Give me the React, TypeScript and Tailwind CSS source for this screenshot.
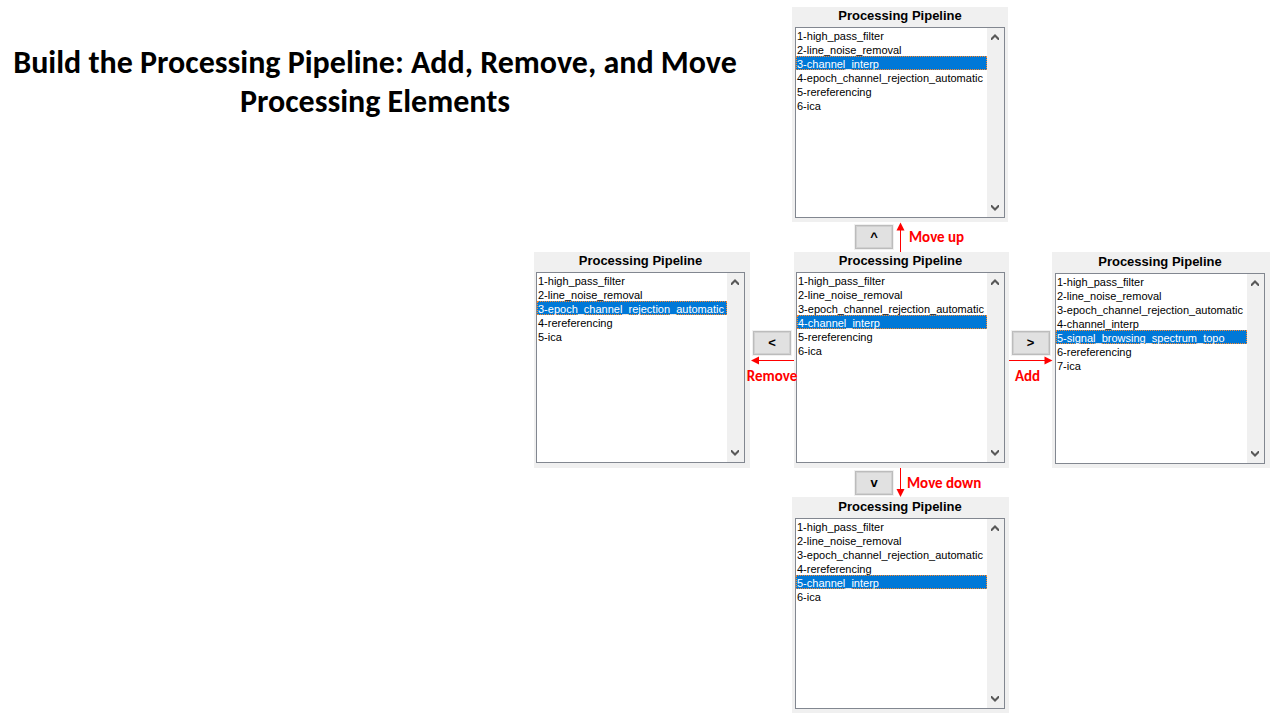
import { useId } from "react";
import type { ReactNode } from "react";

type PanelProps = {
  items: string[];
  selected: number;
  className: string;
  titleClass?: string;
};

function Chevron({ up = false }: { up?: boolean }) {
  return (
    <svg width="8" height="6" viewBox="0 0 8 6" fill="#585858" aria-hidden="true">
      <path d={up ? "M4 0L8 4V6H7L4 3L1 6H0V4Z" : "M4 6L8 2V0H7L4 3L1 0H0V2Z"} />
    </svg>
  );
}

function PipelinePanel({ items, selected, className, titleClass = "h-5" }: PanelProps) {
  const id = useId();
  return (
    <section className={`bg-[#f0f0f0] ${className}`}>
      <label
        htmlFor={id}
        className={`block text-center text-[13px] leading-[17px] font-bold text-black ${titleClass}`}
      >
        Processing Pipeline
      </label>
      <div className="flex h-[191px] border border-[#828790] bg-white">
        <select
          id={id}
          size={13}
          defaultValue={items[selected]}
          className="min-w-0 flex-1 appearance-none overflow-hidden rounded-none border-0 bg-white p-0 text-[11px] text-black outline-none"
        >
          {items.map((item, i) => (
            <option
              key={item}
              value={item}
              className={
                i === selected
                  ? "h-[14px] min-h-0 border border-dotted border-[#ff8728] bg-[#0078d7] bg-linear-to-r from-[#0078d7] to-[#0078d7] p-0 pt-px text-[11px] leading-[14px] text-white"
                  : "h-[14px] min-h-0 px-px pt-0.5 pb-0 text-[11px] leading-[14px] text-black"
              }
            >
              {item}
            </option>
          ))}
        </select>
        <div className="flex w-[17px] flex-col items-center justify-between bg-[#f0f0f0] py-1.5 pr-0.5">
          <Chevron up />
          <Chevron />
        </div>
      </div>
    </section>
  );
}

function StepButton({ label, children }: { label: string; children: ReactNode }) {
  return (
    <button
      type="button"
      aria-label={label}
      className="flex h-[26px] w-10 shrink-0 items-center justify-center border border-[#f0f0f0] bg-[#bcbcbc] p-px text-[13px] leading-4 font-bold text-black"
    >
      <span className="flex size-full items-center justify-center border border-[#d0d0d0] bg-[#e1e1e1]">
        {children}
      </span>
    </button>
  );
}

function VerticalArrow({ up = false }: { up?: boolean }) {
  return (
    <svg width="9" height="30" viewBox="0 0 9 30" className="shrink-0" aria-hidden="true">
      <path d={up ? "M4.5 6V30" : "M4.5 0V24"} stroke="#ff0000" strokeWidth="1" />
      <path d={up ? "M4.5 0.5L8.5 8.5H0.5Z" : "M4.5 29L8.5 21H0.5Z"} fill="#ff0000" />
    </svg>
  );
}

function HorizontalArrow({ left = false }: { left?: boolean }) {
  return (
    <svg width="44" height="9" viewBox="0 0 44 9" className="shrink-0" aria-hidden="true">
      <path d={left ? "M7 4.5H44" : "M0 4.5H37"} stroke="#ff0000" strokeWidth="1" />
      <path d={left ? "M1 4.5L9 0.5V8.5Z" : "M43.5 4.5L35.5 0.5V8.5Z"} fill="#ff0000" />
    </svg>
  );
}

function Caption({ children }: { children: ReactNode }) {
  return (
    <span className="font-[Carlito,Lato,sans-serif] text-[15px] leading-4 font-bold whitespace-nowrap text-[#ff0000]">
      {children}
    </span>
  );
}

export default function App() {
  return (
    <main className="grid min-h-screen grid-cols-[1fr_216px_42px_217px_43px_218px] content-start bg-white pt-[7px] pr-2.5 font-['Liberation_Sans',Arial,sans-serif]">
      <h1 className="col-span-2 pt-9 text-center font-[Carlito,Lato,sans-serif] text-[32px] leading-[39px] font-bold text-black">
        Build the Processing Pipeline: Add, Remove, and Move Processing Elements
      </h1>
      <PipelinePanel
        className="col-start-4 mr-px px-[3px] pb-1"
        selected={2}
        items={[
          "1-high_pass_filter",
          "2-line_noise_removal",
          "3-channel_interp",
          "4-epoch_channel_rejection_automatic",
          "5-rereferencing",
          "6-ica",
        ]}
      />

      <div className="col-start-4 flex h-[30px] items-center pl-[62px]">
        <StepButton label="Move up">^</StepButton>
        <div className="flex items-center gap-1 pl-0.5">
          <VerticalArrow up />
          <Caption>Move up</Caption>
        </div>
      </div>

      <PipelinePanel
        className="col-start-2 pr-[5px] pb-[5px] pl-0.5"
        selected={2}
        items={[
          "1-high_pass_filter",
          "2-line_noise_removal",
          "3-epoch_channel_rejection_automatic",
          "4-rereferencing",
          "5-ica",
        ]}
      />
      <div className="z-10 col-start-3 flex flex-col items-center pt-[78px] pl-0.5">
        <StepButton label="Remove">&lt;</StepButton>
        <HorizontalArrow left />
        <div className="flex justify-center pt-[3px]">
          <Caption>Remove</Caption>
        </div>
      </div>
      <PipelinePanel
        className="col-start-4 ml-0.5 pr-1 pb-[5px] pl-0.5"
        selected={3}
        items={[
          "1-high_pass_filter",
          "2-line_noise_removal",
          "3-epoch_channel_rejection_automatic",
          "4-channel_interp",
          "5-rereferencing",
          "6-ica",
        ]}
      />
      <div className="z-10 col-start-5 flex flex-col items-center pt-[78px]">
        <StepButton label="Add">&gt;</StepButton>
        <HorizontalArrow />
        <div className="flex justify-center pt-[3px] pr-1.5">
          <Caption>Add</Caption>
        </div>
      </div>
      <PipelinePanel
        className="col-start-6 pr-[5px] pb-1 pl-[3px]"
        titleClass="h-[21px] pt-px"
        selected={4}
        items={[
          "1-high_pass_filter",
          "2-line_noise_removal",
          "3-epoch_channel_rejection_automatic",
          "4-channel_interp",
          "5-signal_browsing_spectrum_topo",
          "6-rereferencing",
          "7-ica",
        ]}
      />

      <div className="col-start-4 flex h-[29px] items-center pl-[62px]">
        <StepButton label="Move down">v</StepButton>
        <div className="flex items-center gap-0.5 pl-0.5">
          <VerticalArrow />
          <Caption>Move down</Caption>
        </div>
      </div>

      <PipelinePanel
        className="col-start-4 pr-1 pb-1 pl-[3px]"
        titleClass="h-[21px] pt-px"
        selected={4}
        items={[
          "1-high_pass_filter",
          "2-line_noise_removal",
          "3-epoch_channel_rejection_automatic",
          "4-rereferencing",
          "5-channel_interp",
          "6-ica",
        ]}
      />
    </main>
  );
}
